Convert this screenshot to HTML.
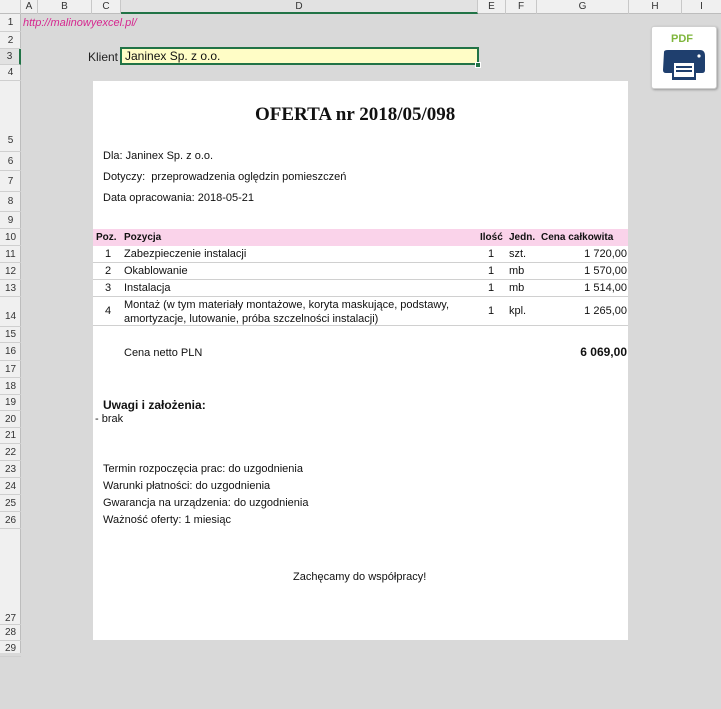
<!DOCTYPE html>
<html><head><meta charset="utf-8"><style>
*{margin:0;padding:0;box-sizing:border-box}
body{width:721px;height:653px;background:#d9d9d9;position:relative;overflow:hidden;font-family:"Liberation Sans",sans-serif;font-size:11px;color:#111}
.a{position:absolute;white-space:nowrap}
#colh{position:absolute;left:0;top:0;width:721px;height:14px;background:#f0f0f0;border-bottom:1px solid #bdbdbd}
.ch{position:absolute;top:0;height:14px;border-right:1px solid #c8c8c8;text-align:center;font-size:10px;line-height:14px;color:#333}
#rowh{position:absolute;left:0;top:14px;width:21px;height:639px;background:#f0f0f0;border-right:1px solid #bdbdbd}
.rh{position:absolute;left:0;width:21px;border-bottom:1px solid #cfcfcf;text-align:center;font-size:10px;color:#333}
.t{font-size:11px}
</style></head><body>
<div id="colh">
<div class="ch" style="left:0;width:21px"></div>
<div class="ch" style="left:21px;width:17px">A</div>
<div class="ch" style="left:38px;width:54px">B</div>
<div class="ch" style="left:92px;width:29px">C</div>
<div class="ch" style="left:121px;width:357px;border-bottom:2px solid #217346;background:#e2e2e2">D</div>
<div class="ch" style="left:478px;width:28px">E</div>
<div class="ch" style="left:506px;width:31px">F</div>
<div class="ch" style="left:537px;width:92px">G</div>
<div class="ch" style="left:629px;width:53px">H</div>
<div class="ch" style="left:682px;width:39px;border-right:none">I</div>
</div>
<div id="rowh">
<div class="rh" style="top:0;height:18px;line-height:18px">1</div>
<div class="rh" style="top:18px;height:17px;line-height:17px">2</div>
<div class="rh" style="top:35px;height:16px;line-height:16px;background:#e2e2e2;border-right:2px solid #217346">3</div>
<div class="rh" style="top:51px;height:16px;line-height:16px">4</div>
<div class="rh" style="top:67px;height:71px;line-height:120px">5</div>
<div class="rh" style="top:138px;height:19px;line-height:19px">6</div>
<div class="rh" style="top:157px;height:21px;line-height:21px">7</div>
<div class="rh" style="top:178px;height:20px;line-height:20px">8</div>
<div class="rh" style="top:198px;height:17px;line-height:17px">9</div>
<div class="rh" style="top:215px;height:17px;line-height:17px">10</div>
<div class="rh" style="top:232px;height:17px;line-height:17px">11</div>
<div class="rh" style="top:249px;height:17px;line-height:17px">12</div>
<div class="rh" style="top:266px;height:17px;line-height:17px">13</div>
<div class="rh" style="top:283px;height:30px;line-height:40px">14</div>
<div class="rh" style="top:313px;height:16px;line-height:16px">15</div>
<div class="rh" style="top:329px;height:18px;line-height:18px">16</div>
<div class="rh" style="top:347px;height:17px;line-height:17px">17</div>
<div class="rh" style="top:364px;height:17px;line-height:17px">18</div>
<div class="rh" style="top:381px;height:16px;line-height:16px">19</div>
<div class="rh" style="top:397px;height:17px;line-height:17px">20</div>
<div class="rh" style="top:414px;height:16px;line-height:16px">21</div>
<div class="rh" style="top:430px;height:17px;line-height:17px">22</div>
<div class="rh" style="top:447px;height:17px;line-height:17px">23</div>
<div class="rh" style="top:464px;height:17px;line-height:17px">24</div>
<div class="rh" style="top:481px;height:17px;line-height:17px">25</div>
<div class="rh" style="top:498px;height:17px;line-height:17px">26</div>
<div class="rh" style="top:515px;height:96px;line-height:180px">27</div>
<div class="rh" style="top:611px;height:16px;line-height:16px">28</div>
<div class="rh" style="top:627px;height:16px;line-height:16px">29</div>
</div>

<div class="a" style="left:23px;top:17px;color:#d6278f;font-style:italic;font-size:11px">http://malinowyexcel.pl/</div>
<div class="a" style="left:88px;top:50px;font-size:12px;color:#222">Klient</div>
<div class="a" style="left:120px;top:47px;width:359px;height:18px;background:#fffdc6;border:2px solid #217346;font-size:12px;padding-left:3px;line-height:14px">Janinex Sp. z o.o.</div>
<div class="a" style="left:475px;top:62px;width:6px;height:6px;background:#217346;border:1px solid #fff"></div>

<div class="a" style="left:651px;top:26px;width:66px;height:63px;background:#fff;border:1px solid #cfcfcf;border-radius:3px;box-shadow:1px 1px 2px #999"></div>
<div class="a" style="left:671px;top:33px;color:#7fb63c;font-weight:bold;font-size:11px">PDF</div>
<svg class="a" style="left:660px;top:48px" width="48" height="34" viewBox="0 0 48 34">
<path d="M4 4 Q4 2 8 2 H40 Q45 2 45 8 V22 Q45 25 42 25 H36 V32 H12 V25 H6 Q3 25 3 22 Z" fill="#1f3f6e"/>
<circle cx="39" cy="8" r="1.6" fill="#fff"/>
<rect x="14" y="15" width="20" height="14" fill="#fff"/>
<rect x="16" y="18" width="16" height="2" fill="#1f3f6e"/>
<rect x="16" y="22" width="16" height="2" fill="#1f3f6e"/>
</svg>

<div class="a" style="left:93px;top:81px;width:535px;height:559px;background:#fff"></div>
<div class="a" style="left:255px;top:104px;font-family:'Liberation Serif',serif;font-weight:bold;font-size:19px;color:#111">OFERTA nr 2018/05/098</div>
<div class="a t" style="left:103px;top:150px">Dla: Janinex Sp. z o.o.</div>
<div class="a t" style="left:103px;top:171px">Dotyczy:&nbsp; przeprowadzenia oględzin pomieszczeń</div>
<div class="a t" style="left:103px;top:192px">Data opracowania: 2018-05-21</div>

<div class="a" style="left:93px;top:229px;width:535px;height:17px;background:#fad3ea"></div>
<div class="a" style="left:96px;top:232px;font-weight:bold;font-size:10px">Poz.</div>
<div class="a" style="left:124px;top:232px;font-weight:bold;font-size:10px">Pozycja</div>
<div class="a" style="left:480px;top:232px;font-weight:bold;font-size:10px">Ilość</div>
<div class="a" style="left:509px;top:232px;font-weight:bold;font-size:10px">Jedn.</div>
<div class="a" style="left:541px;top:232px;font-weight:bold;font-size:10px">Cena całkowita</div>

<div class="a" style="left:93px;top:262px;width:535px;border-top:1px solid #d0d0d0"></div>
<div class="a" style="left:93px;top:279px;width:535px;border-top:1px solid #d0d0d0"></div>
<div class="a" style="left:93px;top:296px;width:535px;border-top:1px solid #d0d0d0"></div>
<div class="a" style="left:93px;top:325px;width:535px;border-top:1px solid #d0d0d0"></div>

<div class="a t" style="left:105px;top:248px">1</div><div class="a t" style="left:124px;top:248px">Zabezpieczenie instalacji</div><div class="a t" style="left:488px;top:248px">1</div><div class="a t" style="left:509px;top:248px">szt.</div><div class="a t" style="left:540px;top:248px;width:87px;text-align:right">1 720,00</div>
<div class="a t" style="left:105px;top:265px">2</div><div class="a t" style="left:124px;top:265px">Okablowanie</div><div class="a t" style="left:488px;top:265px">1</div><div class="a t" style="left:509px;top:265px">mb</div><div class="a t" style="left:540px;top:265px;width:87px;text-align:right">1 570,00</div>
<div class="a t" style="left:105px;top:282px">3</div><div class="a t" style="left:124px;top:282px">Instalacja</div><div class="a t" style="left:488px;top:282px">1</div><div class="a t" style="left:509px;top:282px">mb</div><div class="a t" style="left:540px;top:282px;width:87px;text-align:right">1 514,00</div>
<div class="a t" style="left:105px;top:305px">4</div><div class="a t" style="left:124px;top:298px;line-height:14px">Montaż (w tym materiały montażowe, koryta maskujące, podstawy,<br>amortyzacje, lutowanie, próba szczelności instalacji)</div><div class="a t" style="left:488px;top:305px">1</div><div class="a t" style="left:509px;top:305px">kpl.</div><div class="a t" style="left:540px;top:305px;width:87px;text-align:right">1 265,00</div>

<div class="a t" style="left:124px;top:347px">Cena netto PLN</div>
<div class="a" style="left:540px;top:345px;width:87px;text-align:right;font-weight:bold;font-size:12px">6 069,00</div>

<div class="a" style="left:103px;top:398px;font-weight:bold;font-size:12px">Uwagi i założenia:</div>
<div class="a t" style="left:95px;top:413px">- brak</div>
<div class="a t" style="left:103px;top:463px">Termin rozpoczęcia prac: do uzgodnienia</div>
<div class="a t" style="left:103px;top:480px">Warunki płatności: do uzgodnienia</div>
<div class="a t" style="left:103px;top:497px">Gwarancja na urządzenia: do uzgodnienia</div>
<div class="a t" style="left:103px;top:514px">Ważność oferty: 1 miesiąc</div>
<div class="a t" style="left:293px;top:571px">Zachęcamy do współpracy!</div>
</body></html>
